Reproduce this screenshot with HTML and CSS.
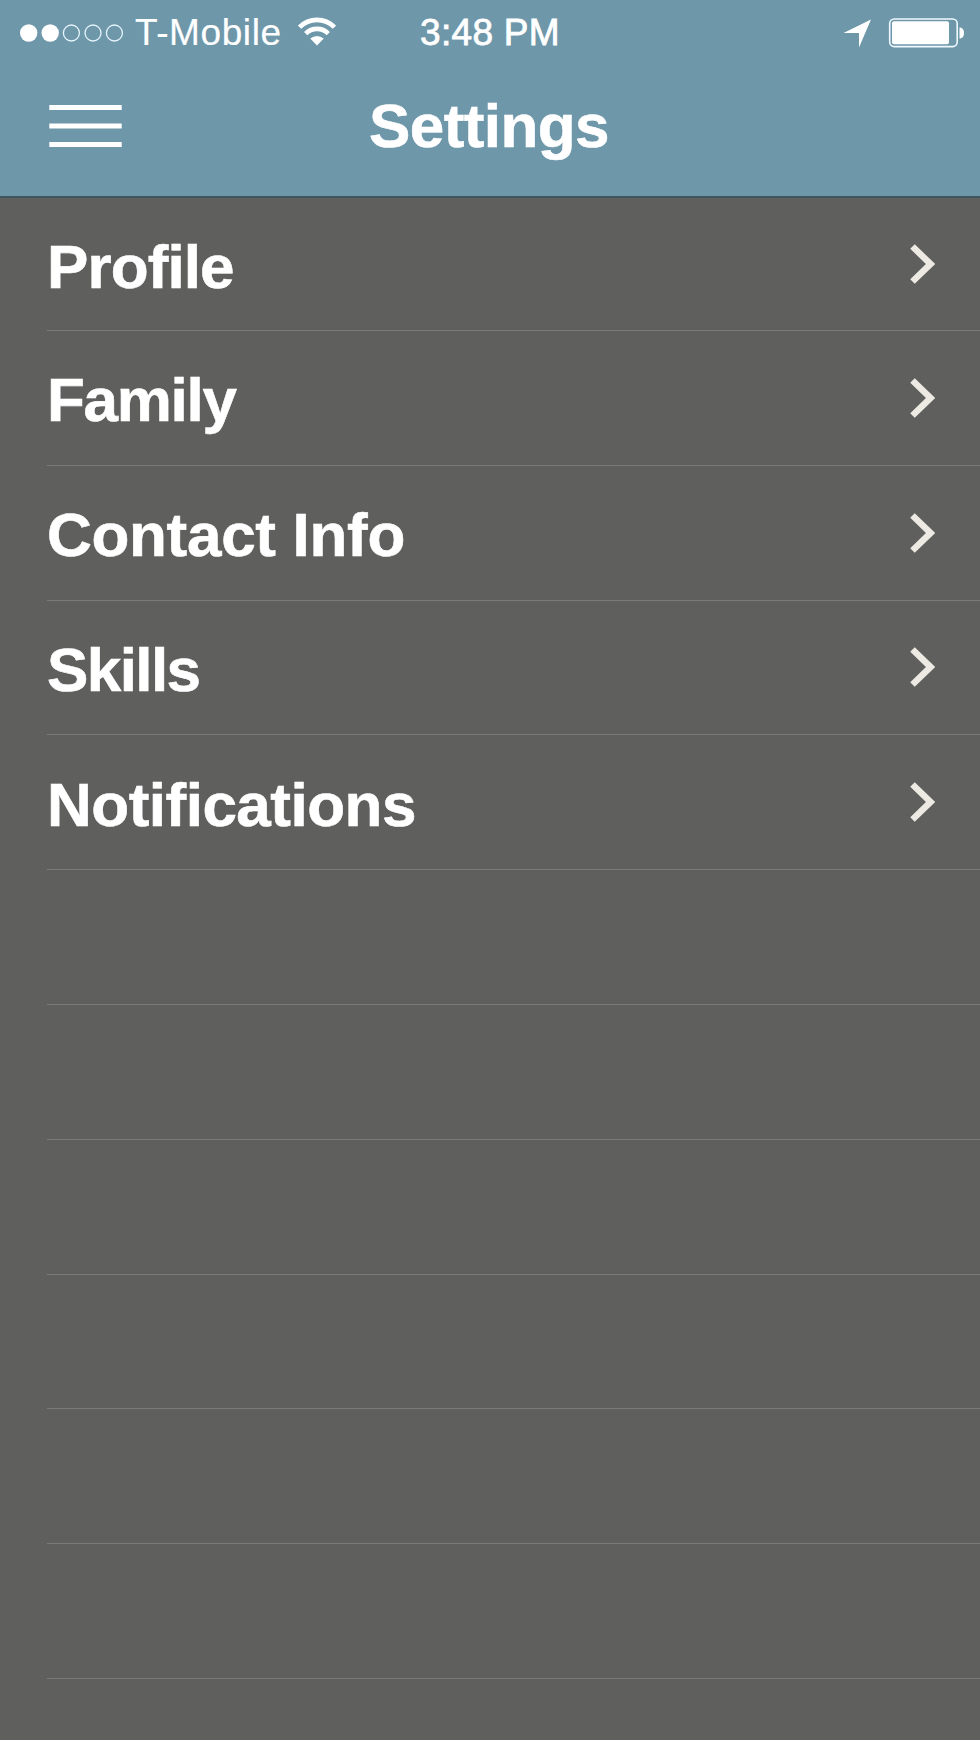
FILE: index.html
```html
<!DOCTYPE html>
<html lang="en">
<head>
<meta charset="utf-8">
<title>Settings</title>
<link rel="stylesheet" href="styles.css">
</head>
<body>
<header class="header">
  <div class="status">
    <div class="status-left">
      <svg class="signal" width="104" height="18" viewBox="0 0 104 18">
        <g fill="#fff"><circle cx="8.7" cy="9" r="8.7"/><circle cx="30.2" cy="9" r="8.7"/></g>
        <g fill="none" stroke="#e6f5fb" stroke-width="1.3"><circle cx="51.4" cy="9" r="8"/><circle cx="73" cy="9" r="8"/><circle cx="94.4" cy="9" r="8"/></g>
      </svg>
      <span class="carrier">T-Mobile</span>
      <svg class="wifi" width="38" height="29" viewBox="0 0 38 29">
        <g fill="none" stroke="#fff" stroke-width="4.6">
          <path d="M1.6 10.2A24.3 24.3 0 0 1 36.4 10.2"/>
          <path d="M7.7 16.6A15.8 15.8 0 0 1 30.3 16.6"/>
        </g>
        <path d="M12.2 21.5Q19 16.4 25.8 21.5L19 28.5Z" fill="#fff"/>
      </svg>
    </div>
    <span class="time">3:48 PM</span>
    <div class="status-right">
      <svg width="30" height="30" viewBox="0 0 30 30"><path d="M29 1.5L17 29.5V15H1.5Z" fill="#fff"/></svg>
      <svg class="battery" width="78" height="32" viewBox="0 0 78 32">
        <rect x="1.7" y="2" width="67.5" height="27.6" rx="4.5" fill="none" stroke="#eefaff" stroke-width="1.6"/>
        <rect x="4" y="4.3" width="57" height="23" rx="2" fill="#fff"/>
        <path d="M71.5 10.5H72.5Q76 11.5 76 16T72.5 21.5H71.5Z" fill="#fff"/>
      </svg>
    </div>
  </div>
  <div class="nav">
    <svg class="menu" width="73" height="42" viewBox="0 0 73 42"><path d="M.3 2.5H72.7M.3 21H72.7M.3 39.5H72.7" stroke="#fff" stroke-width="5"/></svg>
    <h1 class="title">Settings</h1>
  </div>
</header>
<main class="list">
  <div class="row"><span class="label profile">Profile</span><svg class="chevron" width="25" height="40" viewBox="0 0 25 40"><path d="M2.5 2.5L20.5 20L2.5 37.5" fill="none" stroke="#eceae2" stroke-width="6.5"/></svg></div>
  <div class="row"><span class="label family">Family</span><svg class="chevron" width="25" height="40" viewBox="0 0 25 40"><path d="M2.5 2.5L20.5 20L2.5 37.5" fill="none" stroke="#eceae2" stroke-width="6.5"/></svg></div>
  <div class="row"><span class="label contact">Contact Info</span><svg class="chevron" width="25" height="40" viewBox="0 0 25 40"><path d="M2.5 2.5L20.5 20L2.5 37.5" fill="none" stroke="#eceae2" stroke-width="6.5"/></svg></div>
  <div class="row"><span class="label skills">Skills</span><svg class="chevron" width="25" height="40" viewBox="0 0 25 40"><path d="M2.5 2.5L20.5 20L2.5 37.5" fill="none" stroke="#eceae2" stroke-width="6.5"/></svg></div>
  <div class="row"><span class="label notifications">Notifications</span><svg class="chevron" width="25" height="40" viewBox="0 0 25 40"><path d="M2.5 2.5L20.5 20L2.5 37.5" fill="none" stroke="#eceae2" stroke-width="6.5"/></svg></div>
  <div class="row"></div>
  <div class="row"></div>
  <div class="row"></div>
  <div class="row"></div>
  <div class="row"></div>
  <div class="row"></div>
</main>
</body>
</html>
```
FILE: styles.css
```css
* { box-sizing: border-box; }
body {
  margin: 0;
  height: 1740px;
  overflow: hidden;
  background: #5f5f5d;
  color: #fff;
  font-family: "Liberation Sans", Arial, sans-serif;
}
svg { display: block; flex: none; }
.header {
  height: 198px;
  background: #6e97aa;
  border-bottom: 2px solid #3f5661;
}
.status {
  height: 64px;
  display: grid;
  grid-template-columns: 1fr auto 1fr;
  align-items: center;
  padding: 0 14px 0 20px;
  font-size: 37px;
  line-height: 64px;
}
.status-left { display: flex; align-items: center; }
.carrier { margin-left: 11px; padding-top: 1px; letter-spacing: 0.6px; -webkit-text-stroke: 0.2px #fff; }
.wifi { margin: 0 0 3px 16px; }
.time { margin-right: 6px; padding-top: 1px; letter-spacing: 0.3px; -webkit-text-stroke: 0.8px #fff; }
.status-right { display: flex; align-items: center; justify-content: flex-end; gap: 16px; }
.nav {
  height: 132px;
  display: grid;
  grid-template-columns: 1fr auto 1fr;
  align-items: center;
  padding: 0 49px;
}
.menu { margin-bottom: 9px; }
.title {
  margin: 0 2px 8px 0;
  font-size: 62px;
  line-height: 72px;
  letter-spacing: -0.6px;
  -webkit-text-stroke: 0.6px #fff;
}
.row {
  height: 134.8px;
  margin-left: 47px;
  border-bottom: 1px solid #7a7a78;
  display: flex;
  align-items: center;
  justify-content: space-between;
  padding-right: 45px;
}
.row:first-child { height: 133px; }
.label {
  padding-top: 5px;
  font-size: 62px;
  line-height: 72px;
  font-weight: bold;
  -webkit-text-stroke: 0.6px #fff;
}
.profile { letter-spacing: -0.9px; }
.family { letter-spacing: -1.3px; }
.contact { letter-spacing: -0.3px; }
.skills { letter-spacing: -1.6px; }
.notifications { letter-spacing: -0.5px; }
```
